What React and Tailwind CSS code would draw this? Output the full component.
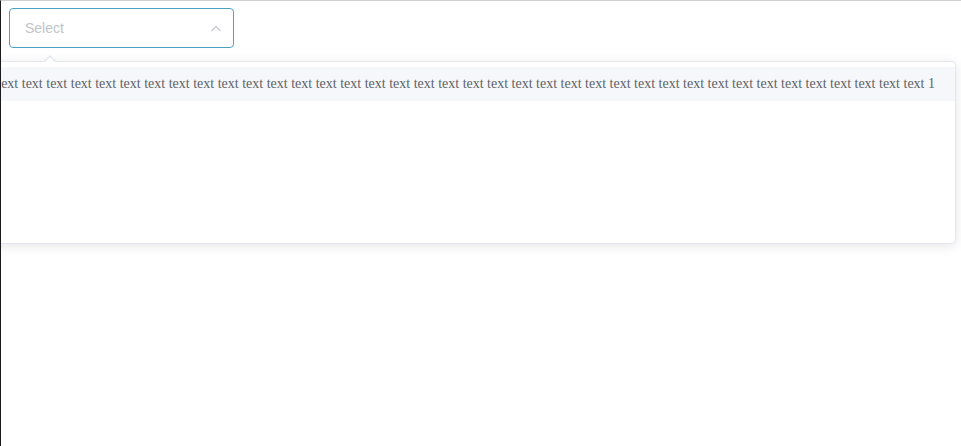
import React from "react";

export default function App() {
  const words = Array.from({ length: 44 }, () => "text").join(" ") + " 1";
  return (
    <div className="relative h-[446px] w-[961px] overflow-hidden border-l border-t border-l-[#1b1b1b] border-t-[#cfcfcf] bg-white">
      <div className="pl-[8px] pt-[7px]">
        <div className="flex h-[40px] w-[225px] items-center justify-between rounded-[4px] border border-[#4aa3c4] bg-white pl-[15px] pr-[10px]">
          <span className="text-[14px] text-[#c0c4cc]" style={{ fontFamily: '"Liberation Sans", Arial, sans-serif' }}>
            Select
          </span>
          <svg width="14" height="14" viewBox="0 0 14 14" className="mt-[2px]">
            <path d="M2.5 9 L7 4.6 L11.5 9" fill="none" stroke="#c0c4cc" strokeWidth="1.1" />
          </svg>
        </div>
      </div>
      <div className="absolute right-[5px] top-[60px] rounded-[4px] border border-[#e4e7ed] bg-white shadow-[0_2px_12px_0_rgba(0,0,0,0.1)]">
        <div className="h-[181px] pt-[5px]">
          <div
            className="h-[34px] whitespace-nowrap bg-[#f5f7fa] px-[20px] text-[14px] leading-[34px] text-[#606266]"
            style={{ fontFamily: '"Liberation Serif", "Times New Roman", serif' }}
          >
            {words}
          </div>
        </div>
      </div>
      <div className="absolute left-[43px] top-[54px] h-0 w-0 border-x-[6px] border-b-[6px] border-x-transparent border-b-[#e4e7ed]" />
      <div className="absolute left-[44px] top-[56px] h-0 w-0 border-x-[5px] border-b-[5px] border-x-transparent border-b-white" />
    </div>
  );
}
